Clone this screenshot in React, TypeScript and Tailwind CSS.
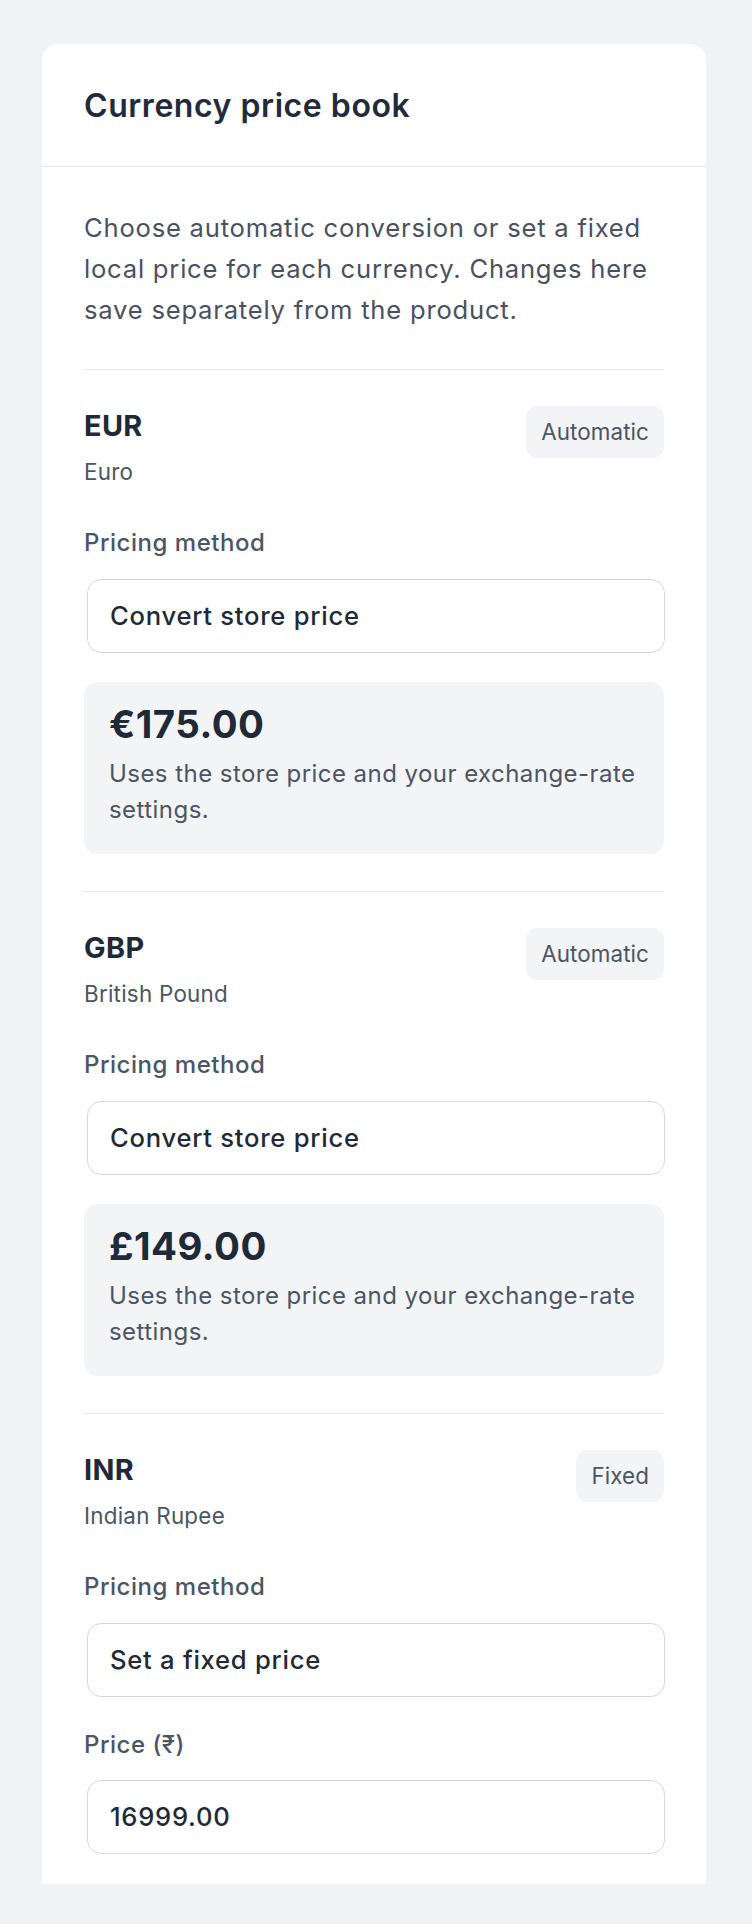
import React from "react";

type Section = {
  code: string;
  name: string;
  badge: string;
  method: string;
  price?: string;
  fixedLabel?: string;
  fixedValue?: string;
};

const sections: Section[] = [
  { code: "EUR", name: "Euro", badge: "Automatic", method: "Convert store price", price: "€175.00" },
  { code: "GBP", name: "British Pound", badge: "Automatic", method: "Convert store price", price: "£149.00" },
  { code: "INR", name: "Indian Rupee", badge: "Fixed", method: "Set a fixed price", fixedLabel: "Price (₹)", fixedValue: "16999.00" },
];

function Field({ children }: { children: React.ReactNode }) {
  return (
    <div className="ml-[2.5px] mr-[-1px] h-[74px] rounded-[14px] border-[1.5px] border-[#d5d8de] bg-white pl-[22.5px] flex items-center text-[25.6px] leading-[32px] font-medium tracking-[0.74px] text-[#1f2937]">
      {children}
    </div>
  );
}

function CurrencySection({ s, last }: { s: Section; last: boolean }) {
  return (
    <div className={`border-t border-[#e6e7eb] pt-[36px] ${last ? "pb-[30px]" : "pb-[37px]"}`}>
      <div className="flex items-start justify-between">
        <div className="flex flex-col">
          <div className="text-[28.8px] leading-[39px] font-bold tracking-[0.4px] text-[#1f2937]">{s.code}</div>
          <div className="mt-[11px] text-[22.4px] leading-[32px] tracking-[0.25px] text-[#4b5563]">{s.name}</div>
        </div>
        <div className="rounded-[11px] bg-[#f3f4f6] px-[15px] py-[10px] text-[22.4px] leading-[32px] tracking-[0.1px] text-[#4b5563]">
          {s.badge}
        </div>
      </div>
      <div className="mt-[39.5px] text-[24px] leading-[32px] font-medium tracking-[0.52px] text-[#4b5563]">Pricing method</div>
      <div className="mt-[19.5px]">
        <Field>{s.method}</Field>
      </div>
      {s.price ? (
        <div className="mt-[29px] h-[172px] rounded-[14px] bg-[#f3f4f6] p-[25px]">
          <div className="text-[38.4px] leading-[35px] font-bold tracking-[0.5px] text-[#1f2937]">{s.price}</div>
          <div className="mt-[14px] text-[24px] leading-[36.6px] tracking-[0.45px] text-[#4b5563]">
            Uses the store price and your exchange-rate settings.
          </div>
        </div>
      ) : (
        <>
          <div className="mt-[32.5px] text-[24px] leading-[32px] font-medium tracking-[0.52px] text-[#4b5563]">{s.fixedLabel}</div>
          <div className="mt-[18.5px]">
            <Field>{s.fixedValue}</Field>
          </div>
        </>
      )}
    </div>
  );
}

export default function App() {
  return (
    <div className="min-h-[1924px] bg-[#f1f2f4] pt-[44px] pb-[40px] font-['Inter','Noto_Sans',sans-serif]">
      <div className="ml-[42px] w-[664px] rounded-t-[16px] bg-white">
        <div className="border-b border-[#e6e7eb] px-[42px] pt-[40px] pb-[37px]">
          <h1 className="text-[32px] leading-[44.8px] font-semibold tracking-[0.55px] text-[#232a3b]">Currency price book</h1>
        </div>
        <div className="px-[42px] pt-[40px]">
          <p className="pb-[39px] text-[25.6px] leading-[41px] tracking-[0.78px] text-[#4b5060]">
            Choose automatic conversion or set a fixed local price for each currency. Changes here save separately from the product.
          </p>
          {sections.map((s, i) => (
            <CurrencySection key={s.code} s={s} last={i === sections.length - 1} />
          ))}
        </div>
      </div>
    </div>
  );
}
